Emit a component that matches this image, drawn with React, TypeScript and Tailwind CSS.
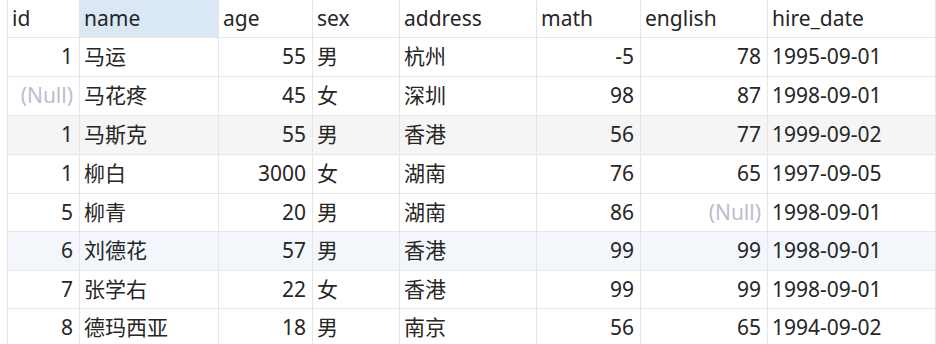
import React from 'react';

type Row = {
  id: number | null;
  name: string;
  age: number;
  sex: string;
  address: string;
  math: number;
  english: number | null;
  hire: string;
};

const rows: Row[] = [
  { id: 1, name: '马运', age: 55, sex: '男', address: '杭州', math: -5, english: 78, hire: '1995-09-01' },
  { id: null, name: '马花疼', age: 45, sex: '女', address: '深圳', math: 98, english: 87, hire: '1998-09-01' },
  { id: 1, name: '马斯克', age: 55, sex: '男', address: '香港', math: 56, english: 77, hire: '1999-09-02' },
  { id: 1, name: '柳白', age: 3000, sex: '女', address: '湖南', math: 76, english: 65, hire: '1997-09-05' },
  { id: 5, name: '柳青', age: 20, sex: '男', address: '湖南', math: 86, english: null, hire: '1998-09-01' },
  { id: 6, name: '刘德花', age: 57, sex: '男', address: '香港', math: 99, english: 99, hire: '1998-09-01' },
  { id: 7, name: '张学右', age: 22, sex: '女', address: '香港', math: 99, english: 99, hire: '1998-09-01' },
  { id: 8, name: '德玛西亚', age: 18, sex: '男', address: '南京', math: 56, english: 65, hire: '1994-09-02' },
];

// row heights so the grid lines land where the screenshot has them
const rowHeights = ['h-[39px]', 'h-[39px]', 'h-[39px]', 'h-[39px]', 'h-[38px]', 'h-[39px]', 'h-[38px]', 'h-[39px]'];
const rowBg = ['bg-white', 'bg-white', 'bg-[#f5f5f5]', 'bg-white', 'bg-white', 'bg-[#f3f7fc]', 'bg-white', 'bg-white'];

const cell = 'flex items-center border-r border-b border-[#e6e6e6] whitespace-nowrap overflow-hidden';
const left = `${cell} justify-start pl-[4px]`;
const right = `${cell} justify-end pr-[6px]`;

function Null() {
  return <span className="text-[#bcbcd0]">(Null)</span>;
}

export default function App() {
  return (
    <div
      className="w-[936px] h-[344px] overflow-hidden bg-white pl-[7px] text-[21px] text-[#262626]"
      style={{ fontFamily: '"Noto Sans", "Noto Sans CJK SC", sans-serif' }}
    >
      <div className="border-l border-[#e6e6e6]">
        {/* header */}
        <div className="flex h-[38px]">
          <div className={`${left} w-[72px]`}>id</div>
          <div className={`${left} w-[139px] bg-[#dae8f6]`}>name</div>
          <div className={`${left} w-[94px]`}>age</div>
          <div className={`${left} w-[87px]`}>sex</div>
          <div className={`${left} w-[137px]`}>address</div>
          <div className={`${left} w-[104px]`}>math</div>
          <div className={`${left} w-[127px]`}>english</div>
          <div className={`${left} flex-1`}>hire_date</div>
        </div>

        {rows.map((r, i) => (
          <div key={i} className={`flex ${rowHeights[i]} ${rowBg[i]}`}>
            <div className={`${right} w-[72px]`}>{r.id === null ? <Null /> : r.id}</div>
            <div className={`${left} w-[139px]`}>{r.name}</div>
            <div className={`${right} w-[94px]`}>{r.age}</div>
            <div className={`${left} w-[87px]`}>{r.sex}</div>
            <div className={`${left} w-[137px]`}>{r.address}</div>
            <div className={`${right} w-[104px]`}>{r.math}</div>
            <div className={`${right} w-[127px]`}>{r.english === null ? <Null /> : r.english}</div>
            <div className={`${left} flex-1`}>{r.hire}</div>
          </div>
        ))}
      </div>
    </div>
  );
}
